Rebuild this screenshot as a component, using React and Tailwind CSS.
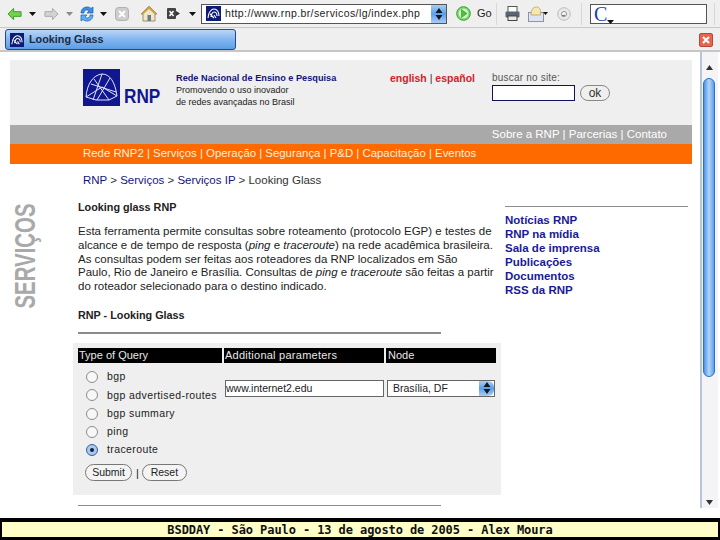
import React from "react";

const Drop = ({ className = "", light = false }) => (
  <svg width="7" height="4" viewBox="0 0 7 4" className={`shrink-0 ${className}`}>
    <path d="M0 0h7L3.500 4z" fill={light ? "#8a8a8a" : "#111"} />
  </svg>
);

const Favicon = ({ size = 15 }) => (
  <svg width={size} height={size} viewBox="0 0 15 15" className="shrink-0">
    <rect width="15" height="15" fill="#0c1a78" />
    <path d="M2 12C2 6 6 3 8 3c3 0 5 3 5 7M5 11c0-3 2-5 3-5 2 0 3 2 3 4M8 9l2 3M4 8l4 4" fill="none" stroke="#fff" strokeWidth="1.1" />
  </svg>
);

const BackArrow = ({ flip = false, off = false }) => (
  <svg width="15" height="14" viewBox="0 0 16 14" className={`shrink-0 ${flip ? "-scale-x-100" : ""}`}>
    <path d="M1 7l6-6v3.500h8v5H7V13z" fill={off ? "#d3d3d3" : "#71d34d"} stroke={off ? "#a9a9a9" : "#3a9a28"} />
  </svg>
);

const Reload = () => (
  <svg width="16" height="18" viewBox="0 0 16 18" className="shrink-0">
    <path d="M2 8c0-4 3-6 6-6 2 0 3 .5 4 1.500L14 2v6H8l2-2c-2-2-5-1-5 2z" fill="#3d8fe0" stroke="#1a5bb0" strokeWidth=".7" />
    <path d="M14 10c0 4-3 6-6 6-2 0-3-.5-4-1.500L2 16v-6h6l-2 2c2 2 5 1 5-2z" fill="#5fb0f0" stroke="#1a5bb0" strokeWidth=".7" />
  </svg>
);

const Stop = () => (
  <svg width="14" height="14" viewBox="0 0 14 14" className="shrink-0">
    <rect x=".5" y=".5" width="13" height="13" rx="3" fill="#cdcdcd" stroke="#b0b0b0" />
    <path d="M4 4l6 6M10 4l-6 6" stroke="#fff" strokeWidth="2" />
  </svg>
);

const Home = () => (
  <svg width="18" height="17" viewBox="0 0 18 17" className="shrink-0">
    <path d="M1 9l8-8 8 8h-2v7H3V9z" fill="#f2e6c4" stroke="#8a7a50" strokeWidth=".8" />
    <path d="M1 9l8-8 8 8-2 .5L9 4 3 9.500z" fill="#c9a050" />
    <rect x="7.500" y="10" width="3.500" height="6" fill="#6a7a90" />
  </svg>
);

const MediaButton = () => (
  <svg width="13" height="11" viewBox="0 0 13 11" className="shrink-0">
    <rect width="9" height="11" rx="1" fill="#444" />
    <path d="M2.500 3l4 5M6.500 3l-4 5" stroke="#fff" strokeWidth="1.500" />
    <path d="M9 3l4 2.500L9 8z" fill="#333" />
  </svg>
);

const GoIcon = () => (
  <svg width="15" height="15" viewBox="0 0 15 15" className="shrink-0">
    <circle cx="7.500" cy="7.500" r="6.800" fill="#7bdc6e" stroke="#2f9d2a" />
    <circle cx="7.500" cy="7.500" r="4.800" fill="#d8f5d0" />
    <path d="M5.500 3.500l5.500 4-5.500 4z" fill="#4fc044" stroke="#2f8d2a" strokeWidth=".6" />
  </svg>
);

const Printer = () => (
  <svg width="15" height="15" viewBox="0 0 15 15" className="shrink-0">
    <rect x="3" y="0.500" width="9" height="6" fill="#fff" stroke="#555" />
    <rect x=".5" y="5.500" width="14" height="6" rx="1" fill="#5a6472" />
    <rect x="3" y="10" width="9" height="4.500" fill="#e8e8e8" stroke="#444" />
  </svg>
);

const Mail = () => (
  <svg width="20" height="16" viewBox="0 0 20 16" className="shrink-0">
    <rect x=".5" y="6.500" width="15" height="9" fill="#dfe3f2" stroke="#8a90b8" />
    <path d="M3 9c0-5 2-8 5.500-8S13 4 12.500 9z" fill="#f6e7b0" stroke="#b09a50" strokeWidth=".7" />
    <path d="M15 6h5l-2.500 3z" fill="#111" />
  </svg>
);

const SmallDisc = () => (
  <svg width="14" height="14" viewBox="0 0 14 14" className="shrink-0">
    <circle cx="7" cy="7" r="6.300" fill="#e8e8e8" stroke="#bdbdbd" />
    <circle cx="7" cy="7" r="2.500" fill="#fff" stroke="#8a9098" />
    <path d="M5 9l3-1" stroke="#667" />
  </svg>
);

const SelectSpin = ({ rounded = false }) => (
  <span
    className={`flex w-[15px] shrink-0 items-center justify-center self-stretch bg-gradient-to-b from-[#a9cdf3] via-[#5b9fe6] to-[#a9cdf3] ${
      rounded ? "rounded-r-md" : ""
    }`}
  >
    <svg width="8" height="12" viewBox="0 0 8 12">
      <path d="M4 0l3.500 5H.5zM4 12L.5 7h7z" fill="#101828" />
    </svg>
  </span>
);

const Toolbar = () => (
  <div className="flex h-[28px] shrink-0 items-center border-b border-[#c9c9c9] bg-[#efefef] pl-[7px]">
    <BackArrow />
    <Drop className="ml-[7px]" />
    <span className="ml-[8px] flex shrink-0"><BackArrow flip off /></span>
    <Drop light className="ml-[7px]" />
    <span className="ml-[6px] flex shrink-0"><Reload /></span>
    <Drop className="ml-[5px]" />
    <span className="ml-[8px] flex shrink-0"><Stop /></span>
    <span className="ml-[11px] flex shrink-0"><Home /></span>
    <span className="ml-[9px] flex shrink-0"><MediaButton /></span>
    <Drop className="ml-[9px]" />
    <div className="ml-[5px] flex h-[20px] w-[246px] shrink-0 items-center border border-[#555] bg-white pl-[4px]">
      <Favicon />
      <span className="ml-[4px] flex-1 truncate text-[10.500px] tracking-[0.4px] text-[#222]">http://www.rnp.br/servicos/lg/index.php</span>
      <SelectSpin />
    </div>
    <span className="ml-[9px] flex shrink-0"><GoIcon /></span>
    <span className="ml-[6px] w-[14px] shrink-0 text-[11px] text-[#222]">Go</span>
    <span className="ml-[5px] h-[22px] w-px shrink-0 bg-[#d8d8d8]" />
    <span className="ml-[8px] flex shrink-0"><Printer /></span>
    <span className="ml-[8px] flex shrink-0"><Mail /></span>
    <span className="ml-[9px] flex shrink-0"><SmallDisc /></span>
    <span className="ml-[10px] h-[22px] w-px shrink-0 bg-[#d8d8d8]" />
    <div className="ml-[8px] flex h-[20px] w-[117px] shrink-0 items-center border border-[#555] bg-white pl-[3px]">
      <span className="relative font-['Liberation_Serif',serif] text-[20px] leading-none text-[#1b3fa0]">
        C
        <Drop className="absolute -right-[7px] bottom-0" />
      </span>
    </div>
    <span className="ml-[7px] h-[22px] w-px shrink-0 bg-[#d8d8d8]" />
  </div>
);

const TabBar = () => (
  <div className="flex h-[24px] shrink-0 items-start border-b-2 border-[#c6c6c6] bg-[#efefef] pl-[5px] pt-[1px]">
    <div className="flex h-[21px] w-[231px] shrink-0 items-center rounded-[3px] border border-[#1f4a8f] bg-gradient-to-b from-[#bcd6f6] via-[#82b6f0] to-[#5d9ee8] pl-[4px]">
      <Favicon size={14} />
      <span className="ml-[5px] text-[10.800px] font-bold text-[#1d2a40]">Looking Glass</span>
    </div>
    <span className="ml-[463px] mt-[4px] flex h-[14px] w-[14px] shrink-0 items-center justify-center rounded-[2px] border border-[#b5483a] bg-[#e8664f]">
      <svg width="8" height="8" viewBox="0 0 8 8">
        <path d="M1 1l6 6M7 1l-6 6" stroke="#fff" strokeWidth="2" />
      </svg>
    </span>
  </div>
);

const LogoMark = () => (
  <svg width="37" height="37" viewBox="0 0 37 37" className="shrink-0">
    <rect width="37" height="37" fill="#11188f" />
    <path
      d="M3 28C4 15 10 6 19 5c8 0 13 8 15 22l-8 4H13zM3 28l16-10 15 9M11 10l15 21M19 5l-9 26M8 15l25 8M27 9L14 31"
      fill="none"
      stroke="#dfe3ff"
      strokeWidth="1"
    />
  </svg>
);

const Header = () => (
  <div className="mx-[10px] flex h-[65px] w-[682px] shrink-0 bg-[#efefef] pl-[73px] pt-[9px]">
    <LogoMark />
    <div className="ml-[4px] mt-[14px] w-[36px] shrink-0">
      <span className="block origin-left scale-x-[0.82] whitespace-nowrap text-[21px] font-bold leading-[25px] text-[#11188f]">RNP</span>
    </div>
    <div className="ml-[16px] mt-[3px] w-[214px] shrink-0 text-[9px] leading-[12px] text-[#222]">
      <div className="text-[9.200px] font-bold leading-[12px] text-[#14147a]">Rede Nacional de Ensino e Pesquisa</div>
      <div>Promovendo o uso inovador</div>
      <div>de redes avançadas no Brasil</div>
    </div>
    <div className="mt-[3px] w-[102px] shrink-0 text-[10.500px] font-bold leading-[12px] text-[#d3202a]">
      english <span className="font-normal text-[#333]">|</span> español
    </div>
    <div className="mt-[3px] shrink-0">
      <div className="text-[10px] leading-[12px] tracking-[0.2px] text-[#555]">buscar no site:</div>
      <div className="mt-[1px] flex items-center">
        <span className="h-[16px] w-[83px] border border-[#12125c] bg-white" />
        <span className="ml-[5px] flex h-[16px] w-[30px] items-center justify-center rounded-full border border-[#888] bg-[#efefef] text-[12px] leading-none text-[#333]">
          ok
        </span>
      </div>
    </div>
  </div>
);

const Bars = () => (
  <div className="mx-[10px] w-[682px] shrink-0">
    <div className="flex h-[19px] items-center justify-end bg-[#a9a9a9] pr-[25px] text-[11.500px] text-white">
      Sobre a RNP | Parcerias | Contato
    </div>
    <div className="flex h-[20px] items-center bg-[#ff6a00] pl-[73px] text-[11.400px] text-[#fff0dc]">
      Rede RNP2 | Serviços | Operação | Segurança | P&amp;D | Capacitação | Eventos
    </div>
  </div>
);

const RADIOS = ["bgp", "bgp advertised-routes", "bgp summary", "ping", "traceroute"];

const Radio = ({ checked }) => (
  <span
    className={`flex h-[12px] w-[12px] shrink-0 items-center justify-center rounded-full border ${
      checked ? "border-[#3b5f9a] bg-[#a9c9f0]" : "border-[#8c8c8c] bg-[#f7f7f7]"
    }`}
  >
    {checked ? <span className="h-[4px] w-[4px] rounded-full bg-[#10203f]" /> : null}
  </span>
);

const Pill = ({ children, className = "" }) => (
  <span className={`flex h-[17px] items-center justify-center rounded-full border border-[#777] bg-[#f4f4f4] text-[10.500px] text-[#222] ${className}`}>
    {children}
  </span>
);

const QueryForm = () => (
  <div className="ml-[-5px] mt-[9px] h-[152px] w-[428px] bg-[#efefef] pl-[5px] pt-[5px]">
    <div className="flex h-[15px] gap-[2px] text-[11px] leading-[15px] text-[#e8e8e8]">
      <div className="w-[144px] bg-black pl-[1px]">Type of Query</div>
      <div className="w-[160px] bg-black pl-[1px] tracking-[0.25px]">Additional parameters</div>
      <div className="w-[110px] bg-black pl-[2px]">Node</div>
    </div>
    <div className="flex">
      <div className="w-[146px] shrink-0 pt-[5px]">
        {RADIOS.map((label, index) => (
          <div key={label} className="flex h-[18.300px] items-center pl-[8px]">
            <Radio checked={index === 4} />
            <span className="ml-[9px] whitespace-nowrap text-[10.500px] tracking-[0.4px] text-[#222]">{label}</span>
          </div>
        ))}
        <div className="mt-[5px] flex items-center pl-[7px] text-[11px]">
          <Pill className="w-[47px]">Submit</Pill>
          <span className="ml-[4px] mr-[3px] text-[#222]">|</span>
          <Pill className="w-[45px]">Reset</Pill>
        </div>
      </div>
      <div className="ml-[1px] mt-[17px] flex h-[17px] w-[159px] shrink-0 items-center border border-[#666] bg-white text-[10.500px] text-[#222]">
        www.internet2.edu
      </div>
      <div className="ml-[3px] mt-[17px] flex h-[17px] w-[108px] shrink-0 items-center justify-between border border-[#666] bg-white pl-[5px] text-[10.500px] text-[#222]">
        Brasília, DF
        <SelectSpin rounded />
      </div>
    </div>
  </div>
);

const SIDE_LINKS = ["Notícias RNP", "RNP na mídia", "Sala de imprensa", "Publicações", "Documentos", "RSS da RNP"];

const MainRow = () => (
  <div className="flex">
    <div className="ml-[14px] mt-[16px] flex h-[105px] w-[22px] shrink-0 items-center justify-center">
      <span className="scale-x-[0.68] rotate-[-90deg] whitespace-nowrap text-[30px] font-bold leading-none text-[#a9a9a9]">SERVIÇOS</span>
    </div>
    <div className="ml-[42px] w-[427px] shrink-0">
      <h2 className="mt-[13px] text-[10.800px] font-bold leading-[14px] text-[#222]">Looking glass RNP</h2>
      <p className="mt-[11px] text-[11.500px] leading-[13.800px] text-[#222]">
        Esta ferramenta permite consultas sobre roteamento (protocolo EGP) e testes de
        <br />
        alcance e de tempo de resposta (<i>ping</i> e <i>traceroute</i>) na rede acadêmica brasileira.
        <br />
        As consultas podem ser feitas aos roteadores da RNP localizados em São
        <br />
        Paulo, Rio de Janeiro e Brasília. Consultas de <i>ping</i> e <i>traceroute</i> são feitas a partir
        <br />
        do roteador selecionado para o destino indicado.
      </p>
      <h2 className="mt-[14px] text-[10.800px] font-bold leading-[14px] text-[#222]">RNP - Looking Glass</h2>
      <div className="mt-[10px] h-[2px] w-[363px] bg-[#8c8c8c]" />
      <QueryForm />
      <div className="mt-[10px] h-px w-[363px] bg-[#8c8c8c]" />
    </div>
    <div className="mt-[19px] w-[183px] shrink-0">
      <div className="mb-[6px] h-px bg-[#8c8c8c]" />
      {SIDE_LINKS.map((link) => (
        <div key={link} className="text-[11.500px] font-bold leading-[14px] text-[#1a1a96]">
          {link}
        </div>
      ))}
    </div>
  </div>
);

const Scrollbar = () => (
  <div className="flex w-[18px] shrink-0 flex-col items-center border-l-2 border-[#b9c4d4] bg-[#f4f4f6] pr-[2px] pt-[13px]">
    <svg width="7" height="5" viewBox="0 0 7 5"><path d="M3.500 0L7 5H0z" fill="#333" /></svg>
    <div className="mt-[8px] h-[299px] w-[12px] rounded-[6px] border border-[#2d6fc8] bg-gradient-to-r from-[#4d93e6] via-[#b4d6f8] to-[#5b9ee8]" />
    <svg width="7" height="5" viewBox="0 0 7 5" className="mb-[3px] mt-auto"><path d="M3.500 5L7 0H0z" fill="#333" /></svg>
  </div>
);

export default function App() {
  return (
    <div className="flex h-[540px] w-[720px] flex-col overflow-hidden bg-white font-['Liberation_Sans',Arial,sans-serif]">
      <Toolbar />
      <TabBar />
      <div className="flex h-[456px] shrink-0">
        <div className="w-[700px] shrink-0 overflow-hidden pt-[8px]">
          <Header />
          <Bars />
          <div className="ml-[83px] mt-[9px] text-[11.500px] leading-[14px] text-[#333]">
            <span className="text-[#14147a]">RNP</span> &gt; <span className="text-[#14147a]">Serviços</span> &gt; <span className="text-[#14147a]">Serviços IP</span> &gt; Looking Glass
          </div>
          <MainRow />
        </div>
        <Scrollbar />
      </div>
      <div className="h-[10px] shrink-0 bg-white" />
      <div className="flex h-[22px] shrink-0 flex-col justify-center bg-black px-[2px]">
        <div className="flex h-[15px] items-center justify-center bg-[#ffffc8] pt-[1px] font-['DejaVu_Sans_Mono',monospace] text-[12px] font-bold tracking-[-0.09px] text-[#111]">
          BSDDAY - São Paulo - 13 de agosto de 2005 - Alex Moura
        </div>
      </div>
    </div>
  );
}
